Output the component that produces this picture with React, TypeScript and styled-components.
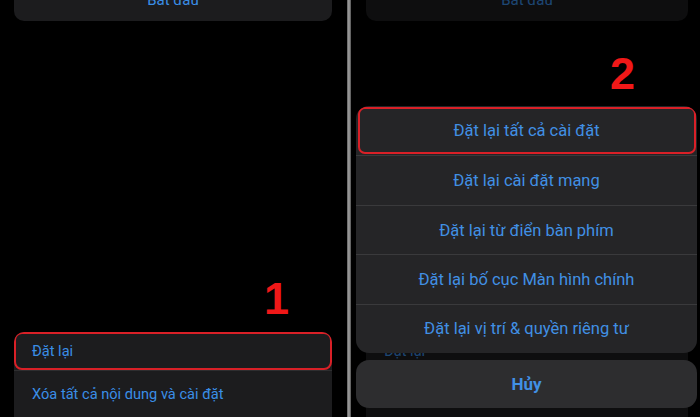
import * as React from 'react'
import styled, { createGlobalStyle } from 'styled-components'

const GlobalStyle = createGlobalStyle`
  html, body {
    margin: 0;
    padding: 0;
    background: #000;
  }
  body {
    font-family: Roboto, "Noto Sans", "DejaVu Sans", sans-serif;
  }
`

const Screen = styled.div`
  display: flex;
  width: 700px;
  height: 417px;
  overflow: hidden;
  background: #000;
`

const Panel = styled.div<{ $width: number }>`
  position: relative;
  width: ${(p) => p.$width}px;
  height: 100%;
  flex: none;
  overflow: hidden;
  background: #000;
`

const Divider = styled.div`
  width: 4px;
  flex: none;
  background: linear-gradient(90deg, #5e5e5e, #9a9a9a 40%, #8a8a8a 70%, #4a4a4a);
`

const Page = styled.div<{ $left: number; $right: number }>`
  display: flex;
  flex-direction: column;
  height: 100%;
  padding: 0 ${(p) => p.$right}px 0 ${(p) => p.$left}px;
  box-sizing: border-box;
`

const TopCard = styled.div`
  margin-top: -21px;
  height: 42px;
  border-radius: 10px;
  background: #1c1c1e;
  display: flex;
  align-items: center;
  justify-content: center;
  color: #3a8ee6;
  font-size: 15px;
`

const Spacer = styled.div`
  flex: 1;
`

const Step = styled.div<{ $right: number }>`
  align-self: flex-end;
  margin-right: ${(p) => p.$right}px;
  color: #f01818;
  font-family: "Liberation Sans", Arial, sans-serif;
  font-weight: 700;
  font-size: 45px;
  line-height: 45px;
`

const Card = styled.div`
  margin-top: 11px;
  border-radius: 10px 10px 0 0;
  background: #1c1c1e;
  overflow: hidden;
`

const Row = styled.div<{ $height: number; $marked?: boolean }>`
  position: relative;
  height: ${(p) => p.$height}px;
  display: flex;
  align-items: center;
  padding-left: 18px;
  color: #3a8ee6;
  font-size: 14.6px;
  & + & {
    border-top: 1px solid #2e2e30;
  }
  ${(p) =>
    p.$marked &&
    `
    &::after {
      content: '';
      position: absolute;
      inset: 0;
      border: 2px solid #d92027;
      border-radius: 8px;
    }
  `}
`

const Overlay = styled.div`
  position: absolute;
  inset: 0;
  background: rgba(0, 0, 0, 0.5);
  display: flex;
  flex-direction: column;
  justify-content: flex-end;
  padding: 0 3px 9px 5px;
`

const Sheet = styled.div`
  margin-top: 10px;
  border-radius: 13px;
  background: #252527;
  overflow: hidden;
`

const SheetRow = styled.div<{ $marked?: boolean }>`
  position: relative;
  height: 49.4px;
  box-sizing: border-box;
  display: flex;
  align-items: center;
  justify-content: center;
  color: #4190e4;
  font-size: 16.5px;
  & + & {
    border-top: 1px solid #3a3a3c;
  }
  ${(p) =>
    p.$marked &&
    `
    &::after {
      content: '';
      position: absolute;
      inset: 1px 1px 1px 2px;
      border: 2px solid #d92027;
      border-radius: 7px;
    }
  `}
`

const Cancel = styled.div`
  margin-top: 7px;
  height: 48px;
  border-radius: 13px;
  background: #2d2d2f;
  display: flex;
  align-items: center;
  justify-content: center;
  color: #4190e4;
  font-size: 17px;
  font-weight: 700;
`

const sheetItems = [
  'Đặt lại tất cả cài đặt',
  'Đặt lại cài đặt mạng',
  'Đặt lại từ điển bàn phím',
  'Đặt lại bố cục Màn hình chính',
  'Đặt lại vị trí & quyền riêng tư',
]

const App = () => {
  return (
    <Screen>
      <GlobalStyle />
      <Panel $width={347}>
        <Page $left={14} $right={15}>
          <TopCard>Bắt đầu</TopCard>
          <Spacer />
          <Step $right={43}>1</Step>
          <Card>
            <Row $height={38} $marked>
              Đặt lại
            </Row>
            <Row $height={46}>Xóa tất cả nội dung và cài đặt</Row>
          </Card>
        </Page>
      </Panel>
      <Divider />
      <Panel $width={349}>
        <Page $left={15} $right={12}>
          <TopCard>Bắt đầu</TopCard>
          <Spacer />
          <Card>
            <Row $height={38}>Đặt lại</Row>
            <Row $height={46}>Xóa tất cả nội dung và cài đặt</Row>
          </Card>
        </Page>
        <Overlay>
          <Step $right={62}>2</Step>
          <Sheet>
            {sheetItems.map((item, i) => (
              <SheetRow key={item} $marked={i === 0}>
                {item}
              </SheetRow>
            ))}
          </Sheet>
          <Cancel>Hủy</Cancel>
        </Overlay>
      </Panel>
    </Screen>
  )
}

export default App
